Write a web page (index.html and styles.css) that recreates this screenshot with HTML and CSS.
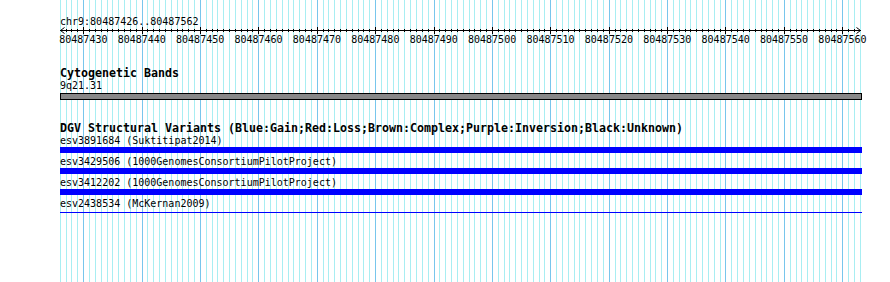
FILE: index.html
```html
<!DOCTYPE html>
<html lang="en">
<head>
<meta charset="utf-8">
<title>chr9:80487426..80487562</title>
<link rel="stylesheet" href="styles.css">
</head>
<body>
<div class="browser">
  <svg class="grid" width="802" height="282" viewBox="0 0 802 282" aria-hidden="true">
    <path class="grid-minor" d="M0.5 0V282M6.5 0V282M11.5 0V282M17.5 0V282M23.5 0V282M29.5 0V282M35.5 0V282M41.5 0V282M47.5 0V282M52.5 0V282
      M58.5 0V282M64.5 0V282M70.5 0V282M76.5 0V282M82.5 0V282M87.5 0V282M93.5 0V282M99.5 0V282M105.5 0V282M111.5 0V282
      M117.5 0V282M122.5 0V282M128.5 0V282M134.5 0V282M140.5 0V282M146.5 0V282M152.5 0V282M157.5 0V282M163.5 0V282M169.5 0V282
      M175.5 0V282M181.5 0V282M187.5 0V282M192.5 0V282M198.5 0V282M204.5 0V282M210.5 0V282M216.5 0V282M222.5 0V282M228.5 0V282
      M233.5 0V282M239.5 0V282M245.5 0V282M251.5 0V282M257.5 0V282M263.5 0V282M268.5 0V282M274.5 0V282M280.5 0V282M286.5 0V282
      M292.5 0V282M298.5 0V282M303.5 0V282M309.5 0V282M315.5 0V282M321.5 0V282M327.5 0V282M333.5 0V282M338.5 0V282M344.5 0V282
      M350.5 0V282M356.5 0V282M362.5 0V282M368.5 0V282M374.5 0V282M379.5 0V282M385.5 0V282M391.5 0V282M397.5 0V282M403.5 0V282
      M409.5 0V282M414.5 0V282M420.5 0V282M426.5 0V282M432.5 0V282M438.5 0V282M444.5 0V282M449.5 0V282M455.5 0V282M461.5 0V282
      M467.5 0V282M473.5 0V282M479.5 0V282M484.5 0V282M490.5 0V282M496.5 0V282M502.5 0V282M508.5 0V282M514.5 0V282M519.5 0V282
      M525.5 0V282M531.5 0V282M537.5 0V282M543.5 0V282M549.5 0V282M555.5 0V282M560.5 0V282M566.5 0V282M572.5 0V282M578.5 0V282
      M584.5 0V282M590.5 0V282M595.5 0V282M601.5 0V282M607.5 0V282M613.5 0V282M619.5 0V282M625.5 0V282M630.5 0V282M636.5 0V282
      M642.5 0V282M648.5 0V282M654.5 0V282M660.5 0V282M665.5 0V282M671.5 0V282M677.5 0V282M683.5 0V282M689.5 0V282M695.5 0V282
      M701.5 0V282M706.5 0V282M712.5 0V282M718.5 0V282M724.5 0V282M730.5 0V282M736.5 0V282M741.5 0V282M747.5 0V282M753.5 0V282
      M759.5 0V282M765.5 0V282M771.5 0V282M776.5 0V282M782.5 0V282M788.5 0V282M794.5 0V282M800.5 0V282"/>
    <path class="grid-major" d="M23.5 0V282M82.5 0V282M140.5 0V282M198.5 0V282M257.5 0V282M315.5 0V282M374.5 0V282
      M432.5 0V282M490.5 0V282M549.5 0V282M607.5 0V282M665.5 0V282M724.5 0V282M782.5 0V282"/>
  </svg>

  <div class="tracks">
    <div class="segment">
      <div class="seg-label">chr9:80487426..80487562</div>
      <svg class="ruler" width="802" height="8" viewBox="0 0 802 8" aria-hidden="true">
        <path class="ruler-line" d="M0 4.5H801"/>
        <path class="ruler-line" d="M4.5 1.5L0.5 4.5L4.5 7.5M796.5 1.5L800.5 4.5L796.5 7.5"/>
        <path class="ruler-line" d="M6.5 3v3M11.5 3v3M17.5 3v3M29.5 3v3M35.5 3v3M41.5 3v3M47.5 3v3M52.5 3v3
          M58.5 3v3M64.5 3v3M70.5 3v3M76.5 3v3M87.5 3v3M93.5 3v3M99.5 3v3M105.5 3v3M111.5 3v3
          M117.5 3v3M122.5 3v3M128.5 3v3M134.5 3v3M146.5 3v3M152.5 3v3M157.5 3v3M163.5 3v3M169.5 3v3
          M175.5 3v3M181.5 3v3M187.5 3v3M192.5 3v3M204.5 3v3M210.5 3v3M216.5 3v3M222.5 3v3M228.5 3v3
          M233.5 3v3M239.5 3v3M245.5 3v3M251.5 3v3M263.5 3v3M268.5 3v3M274.5 3v3M280.5 3v3M286.5 3v3
          M292.5 3v3M298.5 3v3M303.5 3v3M309.5 3v3M321.5 3v3M327.5 3v3M333.5 3v3M338.5 3v3M344.5 3v3
          M350.5 3v3M356.5 3v3M362.5 3v3M368.5 3v3M379.5 3v3M385.5 3v3M391.5 3v3M397.5 3v3M403.5 3v3
          M409.5 3v3M414.5 3v3M420.5 3v3M426.5 3v3M438.5 3v3M444.5 3v3M449.5 3v3M455.5 3v3M461.5 3v3
          M467.5 3v3M473.5 3v3M479.5 3v3M484.5 3v3M496.5 3v3M502.5 3v3M508.5 3v3M514.5 3v3M519.5 3v3
          M525.5 3v3M531.5 3v3M537.5 3v3M543.5 3v3M555.5 3v3M560.5 3v3M566.5 3v3M572.5 3v3M578.5 3v3
          M584.5 3v3M590.5 3v3M595.5 3v3M601.5 3v3M613.5 3v3M619.5 3v3M625.5 3v3M630.5 3v3M636.5 3v3
          M642.5 3v3M648.5 3v3M654.5 3v3M660.5 3v3M671.5 3v3M677.5 3v3M683.5 3v3M689.5 3v3M695.5 3v3
          M701.5 3v3M706.5 3v3M712.5 3v3M718.5 3v3M730.5 3v3M736.5 3v3M741.5 3v3M747.5 3v3M753.5 3v3
          M759.5 3v3M765.5 3v3M771.5 3v3M776.5 3v3M788.5 3v3M794.5 3v3"/>
        <path class="ruler-line" d="M23.5 1v7M82.5 1v7M140.5 1v7M198.5 1v7M257.5 1v7M315.5 1v7M374.5 1v7
          M432.5 1v7M490.5 1v7M549.5 1v7M607.5 1v7M665.5 1v7M724.5 1v7M782.5 1v7"/>
      </svg>
      <div class="scale">
        <span>80487430</span><span>80487440</span><span>80487450</span><span>80487460</span>
        <span>80487470</span><span>80487480</span><span>80487490</span><span>80487500</span>
        <span>80487510</span><span>80487520</span><span>80487530</span><span>80487540</span>
        <span>80487550</span><span>80487560</span>
      </div>
    </div>

    <div class="track track-cyto">
      <div class="track-title">Cytogenetic Bands</div>
      <div class="feat-label">9q21.31</div>
      <div class="band"></div>
    </div>

    <div class="track track-dgv">
      <div class="track-title">DGV Structural Variants (Blue:Gain;Red:Loss;Brown:Complex;Purple:Inversion;Black:Unknown)</div>
      <div class="feature">
        <div class="feat-label">esv3891684 (Suktitipat2014)</div>
        <div class="bar"></div>
      </div>
      <div class="feature">
        <div class="feat-label">esv3429506 (1000GenomesConsortiumPilotProject)</div>
        <div class="bar"></div>
      </div>
      <div class="feature">
        <div class="feat-label">esv3412202 (1000GenomesConsortiumPilotProject)</div>
        <div class="bar"></div>
      </div>
      <div class="feature">
        <div class="feat-label">esv2438534 (McKernan2009)</div>
        <div class="bar bar-thin"></div>
      </div>
    </div>
  </div>
</div>
</body>
</html>
```

FILE: styles.css
```css
html, body {
  margin: 0;
  padding: 0;
  background: #ffffff;
}

body {
  width: 890px;
  height: 282px;
  overflow: hidden;
  font-family: "DejaVu Sans Mono", "Liberation Mono", monospace;
  color: #000000;
}

.browser {
  position: relative;
  height: 282px;
  padding-left: 60px;
}

.grid {
  position: absolute;
  left: 60px;
  top: 0;
  width: 802px;
  height: 282px;
  z-index: 0;
}

.grid path {
  fill: none;
  stroke-width: 1;
}

.grid-minor {
  stroke: #a8eef2;
}

.grid-major {
  stroke: #78c6ec;
}

.tracks {
  position: relative;
  z-index: 1;
  width: 802px;
  padding-top: 16px;
}

.seg-label,
.feat-label,
.scale {
  font-size: 10px;
  line-height: 12px;
  height: 12px;
  white-space: nowrap;
}

.ruler {
  display: block;
  width: 802px;
  height: 8px;
  margin-top: -2px;
}

.ruler-line {
  fill: none;
  stroke: #000000;
  stroke-width: 1;
}

.scale {
  display: flex;
  margin-left: -5.84px;
}

.scale span {
  flex: 0 0 58.394px;
  text-align: center;
}

.track-title {
  font-weight: bold;
  font-size: 11.63px;
  line-height: 13px;
  height: 13px;
  white-space: nowrap;
}

.track-cyto {
  margin-top: 21px;
}

.track-dgv {
  margin-top: 22px;
}

.band {
  box-sizing: border-box;
  margin-top: 1px;
  width: 802px;
  height: 7px;
  background: #888888;
  border: 1px solid #000000;
}

.feature {
  height: 21px;
}

.bar {
  width: 802px;
  height: 6px;
  background: #0000ff;
}

.bar-thin {
  height: 1px;
  margin-top: 2px;
}
```
